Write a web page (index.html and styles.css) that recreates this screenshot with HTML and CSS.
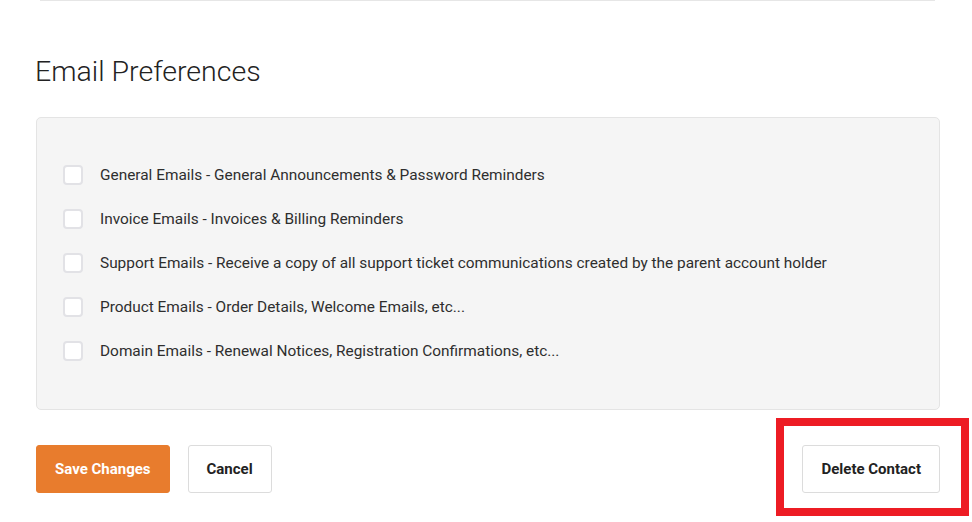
FILE: index.html
```html
<!DOCTYPE html>
<html>
<head>
<meta charset="utf-8">
<link rel="stylesheet" href="styles.css">
</head>
<body>
<div class="page">
  <div class="top-rule"></div>
  <h2 class="title">Email Preferences</h2>
  <div class="panel">
    <label class="row"><span class="box"></span><span class="label">General Emails - General Announcements &amp; Password Reminders</span></label>
    <label class="row"><span class="box"></span><span class="label">Invoice Emails - Invoices &amp; Billing Reminders</span></label>
    <label class="row"><span class="box"></span><span class="label">Support Emails - Receive a copy of all support ticket communications created by the parent account holder</span></label>
    <label class="row"><span class="box"></span><span class="label">Product Emails - Order Details, Welcome Emails, etc...</span></label>
    <label class="row"><span class="box"></span><span class="label">Domain Emails - Renewal Notices, Registration Confirmations, etc...</span></label>
  </div>
  <div class="actions">
    <button class="btn btn-primary">Save Changes</button>
    <button class="btn">Cancel</button>
    <button class="btn btn-right">Delete Contact</button>
  </div>
</div>
<div class="highlight"></div>
</body>
</html>
```
FILE: styles.css
```css
html, body {
  margin: 0;
  padding: 0;
  background: #fff;
  font-family: Roboto, "Liberation Sans", sans-serif;
  color: #333;
}
.page {
  width: 904px;
  margin-left: 36px;
}
.top-rule {
  height: 1px;
  background: #e6e6e6;
  margin: 0 5px 0 4px;
}
.title {
  margin: 0 0 0 -1px;
  padding-top: 53px;
  font-size: 28.5px;
  font-weight: 300;
  line-height: 36px;
  color: #222;
  height: 63px;
}
.panel {
  box-sizing: border-box;
  height: 293px;
  background: #f5f5f5;
  border: 1px solid #e4e4e4;
  border-radius: 5px;
  padding: 35px 26px 0;
}
.row {
  display: flex;
  align-items: center;
  height: 44px;
}
.box {
  box-sizing: border-box;
  width: 20px;
  height: 20px;
  border: 2px solid #e2e2e6;
  border-radius: 4px;
  background: #fff;
  margin-right: 17px;
  flex: none;
}
.label {
  font-size: 15.4px;
  color: #2e2e2e;
}
.actions {
  display: flex;
  margin-top: 35px;
  gap: 18px;
}
.btn {
  box-sizing: border-box;
  height: 48px;
  padding: 0 18px;
  font-family: Roboto, "Liberation Sans", sans-serif;
  font-size: 15px;
  font-weight: 700;
  color: #222;
  background: #fff;
  border: 1px solid #dcdcdc;
  border-radius: 3px;
}
.btn-primary {
  background: #e87c2d;
  border-color: #e87c2d;
  color: #fff;
}
.btn-right {
  margin-left: auto;
}
.highlight {
  position: absolute;
  left: 776px;
  top: 418px;
  width: 177px;
  height: 82px;
  border: 8px solid #ed1c24;
}
```
